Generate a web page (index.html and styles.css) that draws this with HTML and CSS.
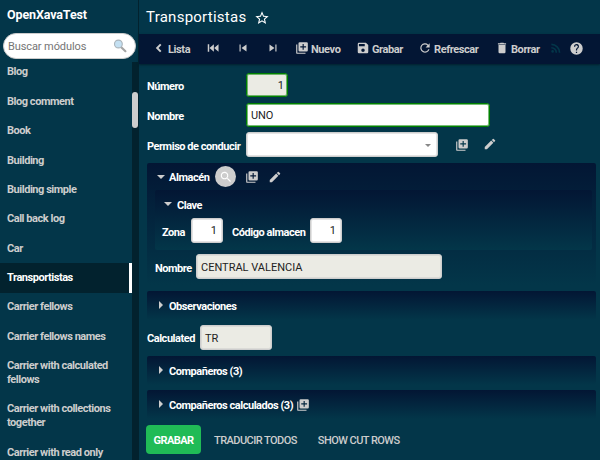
FILE: index.html
```html
<!DOCTYPE html>
<html lang="es">
<head>
<meta charset="utf-8">
<title>Transportistas</title>
<link rel="stylesheet" href="styles.css">
</head>
<body>
<svg class="defs" width="0" height="0">
  <symbol id="add" viewBox="0 0 24 24"><path d="M4 6H2v14a2 2 0 0 0 2 2h14v-2H4zM20 2H8a2 2 0 0 0-2 2v12a2 2 0 0 0 2 2h12a2 2 0 0 0 2-2V4a2 2 0 0 0-2-2zm-1 9h-4v4h-2v-4H9V9h4V5h2v4h4z"/></symbol>
  <symbol id="pencil" viewBox="0 0 24 24"><path d="M3 17.25V21h3.75L17.8 9.94l-3.75-3.75zM20.7 7.04a1 1 0 0 0 0-1.41L18.37 3.3a1 1 0 0 0-1.41 0l-1.83 1.83 3.75 3.75z"/></symbol>
</svg>
<div class="app">
  <aside class="sidebar">
    <div class="brand">OpenXavaTest</div>
    <div class="search">
      <span>Buscar módulos</span>
      <svg width="14" height="14" viewBox="0 0 14 14"><path d="M8 8l4.4 4.2" stroke="#a5a5a5" stroke-width="2.2" stroke-linecap="round"/><circle cx="5.4" cy="5" r="3.9" fill="#c4e0f2" stroke="#aab4bb" stroke-width="1.1"/></svg>
    </div>
    <div class="modules">
      <nav class="list">
        <a>Blog</a><a>Blog comment</a><a>Book</a><a>Building</a><a>Building simple</a><a>Call back log</a><a>Car</a>
        <a class="current">Transportistas</a>
        <a>Carrier fellows</a><a>Carrier fellows names</a><a>Carrier with calculated<br>fellows</a><a>Carrier with collections<br>together</a><a>Carrier with read only</a>
      </nav>
      <div class="track"><div class="thumb"></div></div>
    </div>
  </aside>
  <main class="main">
    <header class="title"><h1>Transportistas</h1>
      <svg class="star" width="16" height="16" viewBox="0 0 24 24"><path d="M22 9.24l-7.19-.62L12 2 9.19 8.63 2 9.24l5.46 4.73L5.82 21 12 17.27 18.18 21l-1.63-7.03zM12 15.4l-3.76 2.27 1-4.28-3.32-2.88 4.38-.38L12 6.1l1.71 4.04 4.38.38-3.32 2.88 1 4.28z"/></svg>
    </header>
    <div class="toolbar">
      <span class="tool t-list"><svg width="14" height="14" viewBox="0 0 24 24"><path d="M16.200 7L13.800 4.700 6.500 12l7.300 7.300 2.400-2.300-5-5z"/></svg><b>Lista</b></span>
      <span class="tool t-first"><svg width="14" height="14" viewBox="0 0 24 24"><path d="M3 5.500h2.500v13H3zM13.500 5.500v13L6 12zM21.500 5.500v13L14 12z"/></svg></span>
      <span class="tool t-prev"><svg width="14" height="14" viewBox="0 0 24 24"><path d="M6 6h2v12H6zM9.500 12l8.500 6V6z"/></svg></span>
      <span class="tool t-next"><svg width="14" height="14" viewBox="0 0 24 24"><path d="M6 18l8.500-6L6 6zM16 6h2v12h-2z"/></svg></span>
      <span class="tool t-new"><svg width="14" height="14"><use href="#add"/></svg><b>Nuevo</b></span>
      <span class="tool t-save"><svg width="14" height="14" viewBox="0 0 24 24"><path d="M17 3H5a2 2 0 0 0-2 2v14a2 2 0 0 0 2 2h14a2 2 0 0 0 2-2V7zm-5 16a3 3 0 1 1 0-6 3 3 0 0 1 0 6zm3-10H5V5h10z"/></svg><b>Grabar</b></span>
      <span class="tool t-refresh"><svg width="14" height="14" viewBox="0 0 24 24"><path d="M17.65 6.35A8 8 0 1 0 19.730 14h-2.080A6 6 0 1 1 12 6c1.660 0 3.140.69 4.220 1.780L13 11h7V4z"/></svg><b>Refrescar</b></span>
      <span class="tool t-delete"><svg width="14" height="14" viewBox="0 0 24 24"><path d="M6 19a2 2 0 0 0 2 2h8a2 2 0 0 0 2-2V7H6zM19 4h-3.500l-1-1h-5l-1 1H5v2h14z"/></svg><b>Borrar</b></span>
      <svg class="rss" width="14" height="14" viewBox="0 0 24 24"><circle cx="6.200" cy="17.800" r="2.200"/><path d="M4 4.440v2.830A12.730 12.730 0 0 1 16.730 20h2.830A15.560 15.560 0 0 0 4 4.440zm0 5.660v2.830A7.070 7.070 0 0 1 11.070 20h2.830A9.900 9.900 0 0 0 4 10.100z"/></svg>
      <svg class="help" width="15" height="15" viewBox="0 0 24 24"><path d="M12 2a10 10 0 1 0 0 20 10 10 0 0 0 0-20zm1 17h-2v-2h2zm2.070-7.750l-.9.920C13.450 12.900 13 13.500 13 15h-2v-.5c0-1.100.45-2.100 1.170-2.830l1.240-1.260A2 2 0 1 0 10 9H8a4 4 0 1 1 7.070 2.250z"/></svg>
    </div>
    <div class="form">
      <div class="row number"><label>Número</label><div class="field readonly required num">1</div></div>
      <div class="row name"><label>Nombre</label><div class="field required">UNO</div></div>
      <div class="row license"><label>Permiso de conducir</label><div class="field select"><i class="caret"></i></div><svg class="act" width="14" height="14"><use href="#add"/></svg><svg class="act pen" width="14" height="14"><use href="#pencil"/></svg></div>
      <section class="frame warehouse">
        <div class="head"><i class="down"></i><b>Almacén</b><span class="round"><svg width="14" height="14" viewBox="0 0 24 24"><path d="M15.500 14h-.8l-.3-.3A6.500 6.500 0 1 0 13.700 14.400l.3.300v.8l5 5 1.500-1.500zm-6 0a4.500 4.500 0 1 1 0-9 4.500 4.500 0 0 1 0 9z"/></svg></span><svg class="act" width="14" height="14"><use href="#add"/></svg><svg class="act pen" width="14" height="14"><use href="#pencil"/></svg></div>
        <section class="frame key">
          <div class="head"><i class="down"></i><b>Clave</b></div>
          <div class="pair"><label class="zone">Zona</label><div class="field num">1</div><label class="code">Código almacen</label><div class="field num">1</div></div>
        </section>
        <div class="pair store"><label>Nombre</label><div class="field readonly">CENTRAL VALENCIA</div></div>
      </section>
      <section class="frame closed remarks"><i class="right"></i><b>Observaciones</b></section>
      <div class="row calculated"><label>Calculated</label><div class="field readonly">TR</div></div>
      <section class="frame closed fellows"><i class="right"></i><b>Compañeros (3)</b></section>
      <section class="frame closed"><i class="right"></i><b>Compañeros calculados (3)</b><svg class="act" width="14" height="14"><use href="#add"/></svg></section>
      <footer class="buttons"><span class="primary">GRABAR</span><span class="translate">TRADUCIR TODOS</span><span>SHOW CUT ROWS</span></footer>
    </div>
  </main>
</div>
</body>
</html>
```

FILE: styles.css
```css
* { box-sizing: border-box; }
body { margin: 0; background: #033649; color: #fff; font: 11px/14px Roboto, sans-serif; overflow: hidden; }
svg { fill: #cdcdcd; flex: none; display: block; }
.defs { position: absolute; }
b, label { font-weight: 700; letter-spacing: -.46px; white-space: nowrap; }
.app { display: flex; width: 600px; height: 460px; overflow: hidden; }

.sidebar { width: 139px; flex: none; display: flex; flex-direction: column; border-right: 1px solid #02222e; }
.brand { height: 33px; padding: 8px 0 0 7px; font-weight: 700; font-size: 12.5px; letter-spacing: -.13px; }
.search { height: 26px; width: 133px; margin-left: 3px; padding: 0 8px 0 4px; flex: none; display: flex; align-items: center; justify-content: space-between; border: 1px solid #ccc; border-radius: 13px; background: #fff; color: #757575; letter-spacing: -.1px; }
.search span { padding-top: 1px; }
.search svg { fill: none; }
.modules { display: flex; margin-top: 3px; height: 398px; overflow: hidden; }
.list { width: 132px; margin-top: -4.200px; display: flex; flex-direction: column; }
.list a { padding: 7.68px 0 7.68px 7px; color: #cdcdcd; font-weight: 700; letter-spacing: -.46px; white-space: nowrap; }
.list .current { background: #02222e; color: #fff; border-right: 3px solid #fff; }
.track { width: 6px; background: #02222e; padding-top: 30px; }
.thumb { height: 36px; border-radius: 3px; background: #cdcdcd; }

.main { flex: 1; min-width: 0; }
.title { height: 34px; display: flex; align-items: center; padding-left: 7px; }
h1 { margin: 0; font-size: 15px; font-weight: 400; letter-spacing: .25px; }
.star { margin: 2px 0 0 8px; fill: #fff; }
.toolbar { height: 30px; display: flex; align-items: center; padding: 0 0 2px 13px; background: #031634; box-shadow: 0 1px 2px #02202c; color: #cdcdcd; }
.tool { display: flex; align-items: center; gap: 2px; flex: none; }
.tool b { padding-top: 3px; letter-spacing: -.4px; }
.t-list { width: 54px; }
.t-first, .t-prev { width: 30px; }
.t-next { width: 29px; }
.t-new { width: 61px; }
.t-save { width: 62px; }
.t-refresh { width: 77px; }
.t-delete { width: 54px; }
.rss { fill: #033649; margin-right: 6px; }

.form { padding: 9px 4px 0 8px; display: flex; flex-direction: column; }
.row, .pair { display: flex; align-items: center; }
.row label { width: 99px; padding-top: 3px; }
.field { height: 25px; border: 1px solid #cdcdcd; border-radius: 3px; background: #fff; color: #222; padding: 1px 5px 0; display: flex; align-items: center; box-shadow: inset 0 0 0 1px #cdcdcd88; }
.readonly { background: #ebebe4; }
.required { border-color: #008000; box-shadow: inset 0 0 0 1px #00800088; }
.num { justify-content: flex-end; }
.number { height: 24px; margin-bottom: 6px; }
.number label { padding-top: 4px; }
.number .field { width: 42px; height: 24px; padding-right: 3px; }
.name { height: 24px; margin-bottom: 5px; }
.name .field { width: 244px; height: 24px; padding-left: 4px; letter-spacing: -.1px; }
.license { height: 25px; margin-bottom: 6px; }
.license label { padding-top: 4px; }
.license .field { width: 192px; margin-right: 17px; }
.license .pen { margin: -1px 0 0 14px; }
.caret { margin: 0 1px 0 auto; border: 3px solid transparent; border-top-color: #888; border-bottom: 0; }

.frame { background: linear-gradient(#031634, #033649); border-radius: 2px; }
.warehouse { height: 122px; padding: 0 4px 0 8px; margin-bottom: 6px; }
.head { display: flex; align-items: center; height: 27px; padding-left: 2px; }
.head b { padding-top: 2px; }
.down { border: 4px solid transparent; border-top-color: #cdcdcd; border-bottom: 0; margin-right: 4px; }
.right { border: 4px solid transparent; border-left-color: #cdcdcd; border-right: 0; margin: 0 6px 3px 0; }
.round { width: 21px; height: 21px; margin: 0 9px 0 6px; border-radius: 50%; background: #cdcdcd; display: flex; align-items: center; justify-content: center; }
.round svg { fill: #fff; }
.head .pen { margin-left: 9px; }
.key { height: 60px; padding-left: 7px; }
.key .head { height: 28px; }
.key .head b { padding-top: 4px; }
.key .head .down { margin-right: 5px; }
.key .field { width: 32px; }
.pair label { padding-top: 4px; }
.zone { width: 29px; }
.code { width: 78px; margin-left: 9px; }
.store { margin-top: 4px; }
.store .field { width: 246px; padding: 2px 4px 0; }
.store label { width: 41px; }
.closed { height: 29px; padding: 2px 0 0 12px; display: flex; align-items: center; }
.closed .act { margin: -1px 0 0 3px; }
.closed b { padding-top: 1px; }
.remarks { margin-bottom: 5px; }
.calculated { margin-bottom: 6px; }
.calculated label { width: 53px; }
.calculated .field { width: 72px; padding: 2px 4px 0; }
.fellows { margin-bottom: 5px; }
.buttons { display: flex; align-items: center; margin: 6px 0 0 -1px; height: 29px; color: #cdcdcd; font-weight: 500; letter-spacing: -.55px; white-space: nowrap; }
.buttons span { padding-top: 2px; }
.buttons .primary { width: 55px; height: 29px; line-height: 29px; padding-top: 1px; text-align: center; border-radius: 4px; background: #20bb56; color: #fff; font-weight: 700; letter-spacing: -.55px; margin-right: 13px; }
.translate { margin-right: 21px; }
```
